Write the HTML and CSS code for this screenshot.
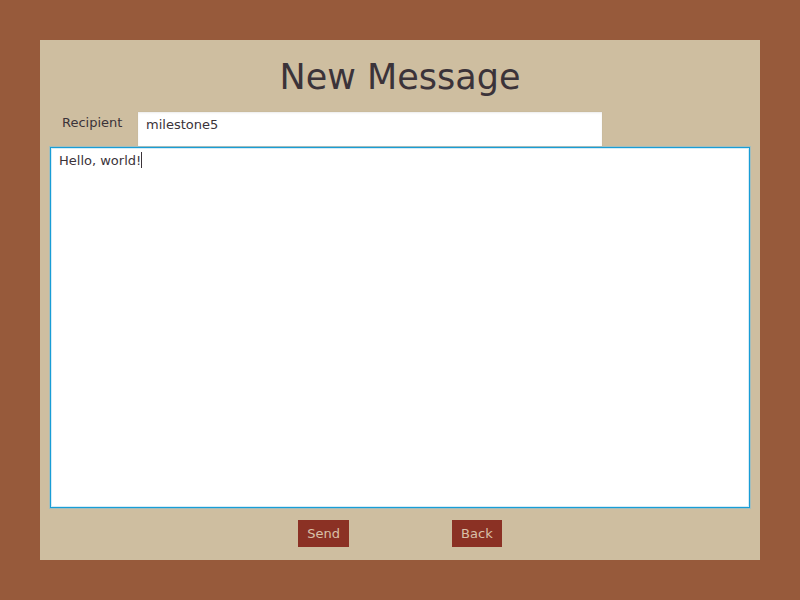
FILE: index.html
```html
<!DOCTYPE html>
<html>
<head>
<meta charset="utf-8">
<link rel="stylesheet" href="styles.css">
</head>
<body>
<div class="panel">
  <h1 class="title">New Message</h1>
  <div class="row">
    <label class="label">Recipient</label>
    <div class="input">milestone5</div>
  </div>
  <div class="textarea"><span>Hello, world!</span><span class="caret"></span></div>
  <div class="buttons">
    <button class="btn">Send</button>
    <button class="btn">Back</button>
  </div>
</div>
</body>
</html>
```
FILE: styles.css
```css
html, body {
  margin: 0;
  padding: 0;
  height: 100%;
}
body {
  background: #975a3b;
  font-family: "DejaVu Sans", sans-serif;
  padding: 40px;
  box-sizing: border-box;
}
.panel {
  background: #cebea0;
  height: 520px;
  box-sizing: border-box;
  padding: 0 10px;
  display: flex;
  flex-direction: column;
}
.title {
  margin: 0;
  height: 72px;
  line-height: 74px;
  text-align: center;
  font-weight: normal;
  font-size: 35px;
  color: #3b3339;
}
.row {
  display: flex;
  align-items: flex-start;
  height: 35px;
}
.label {
  width: 88px;
  padding-left: 12px;
  box-sizing: border-box;
  font-size: 13px;
  color: #3b3339;
  line-height: 20px;
  padding-top: 1px;
}
.input {
  width: 464px;
  height: 34px;
  box-sizing: border-box;
  background: #fff;
  font-size: 13px;
  color: #3b3339;
  padding: 5px 8px;
  line-height: 16px;
  box-shadow: inset 0 1px 2px rgba(0,0,0,0.08), 0 0 1px rgba(0,0,0,0.1);
}
.textarea {
  width: 700px;
  height: 361px;
  box-sizing: border-box;
  background: #fff;
  border: 1px solid #189dd6;
  box-shadow: inset 0 0 0 1px #d4ecf7, 0 0 0 1px rgba(110,190,225,0.45);
  font-size: 13px;
  color: #3b3339;
  padding: 4px 8px;
  line-height: 17px;
}
.caret {
  display: inline-block;
  width: 1px;
  height: 16px;
  background: #3b3339;
  vertical-align: -3px;
}
.buttons {
  display: flex;
  justify-content: center;
  gap: 103px;
  margin-top: 12px;
}
.btn {
  background: #8b3124;
  color: #d9c0a8;
  border: none;
  border-radius: 0;
  font-family: "DejaVu Sans", sans-serif;
  font-size: 13px;
  height: 27px;
  padding: 0 9px;
  margin: 0;
}
```
